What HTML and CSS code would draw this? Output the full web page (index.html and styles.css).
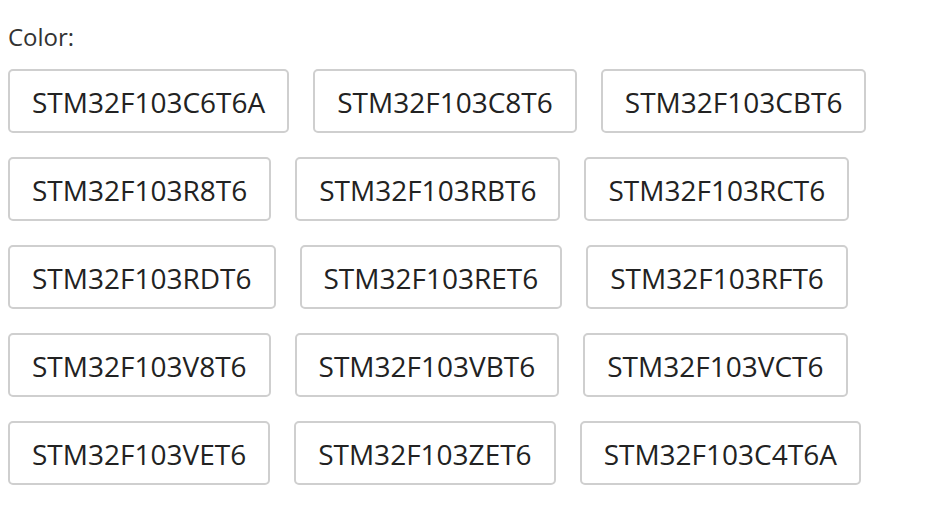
FILE: index.html
```html
<!DOCTYPE html>
<html>
<head>
<meta charset="utf-8">
<link rel="stylesheet" href="styles.css">
</head>
<body>
<div class="picker">
  <div class="label">Color:</div>
  <div class="options">
    <span class="opt">STM32F103C6T6A</span>
    <span class="opt">STM32F103C8T6</span>
    <span class="opt">STM32F103CBT6</span>
    <span class="opt">STM32F103R8T6</span>
    <span class="opt">STM32F103RBT6</span>
    <span class="opt">STM32F103RCT6</span>
    <span class="opt">STM32F103RDT6</span>
    <span class="opt">STM32F103RET6</span>
    <span class="opt">STM32F103RFT6</span>
    <span class="opt">STM32F103V8T6</span>
    <span class="opt">STM32F103VBT6</span>
    <span class="opt">STM32F103VCT6</span>
    <span class="opt">STM32F103VET6</span>
    <span class="opt">STM32F103ZET6</span>
    <span class="opt">STM32F103C4T6A</span>
  </div>
</div>
</body>
</html>
```
FILE: styles.css
```css
body {
  margin: 0;
  background: #fff;
  font-family: "Open Sans", sans-serif;
  color: #333;
}
.picker {
  padding: 23px 8px 0 8px;
}
.label {
  font-size: 24px;
  line-height: 28px;
  margin-bottom: 18px;
}
.options {
  display: flex;
  flex-wrap: wrap;
  gap: 24px 24px;
  width: 900px;
}
.opt {
  display: block;
  font-size: 28px;
  line-height: 36px;
  padding: 13px 22px 11px;
  border: 2px solid #cfcfcf;
  border-radius: 5px;
  color: #222;
}
```
